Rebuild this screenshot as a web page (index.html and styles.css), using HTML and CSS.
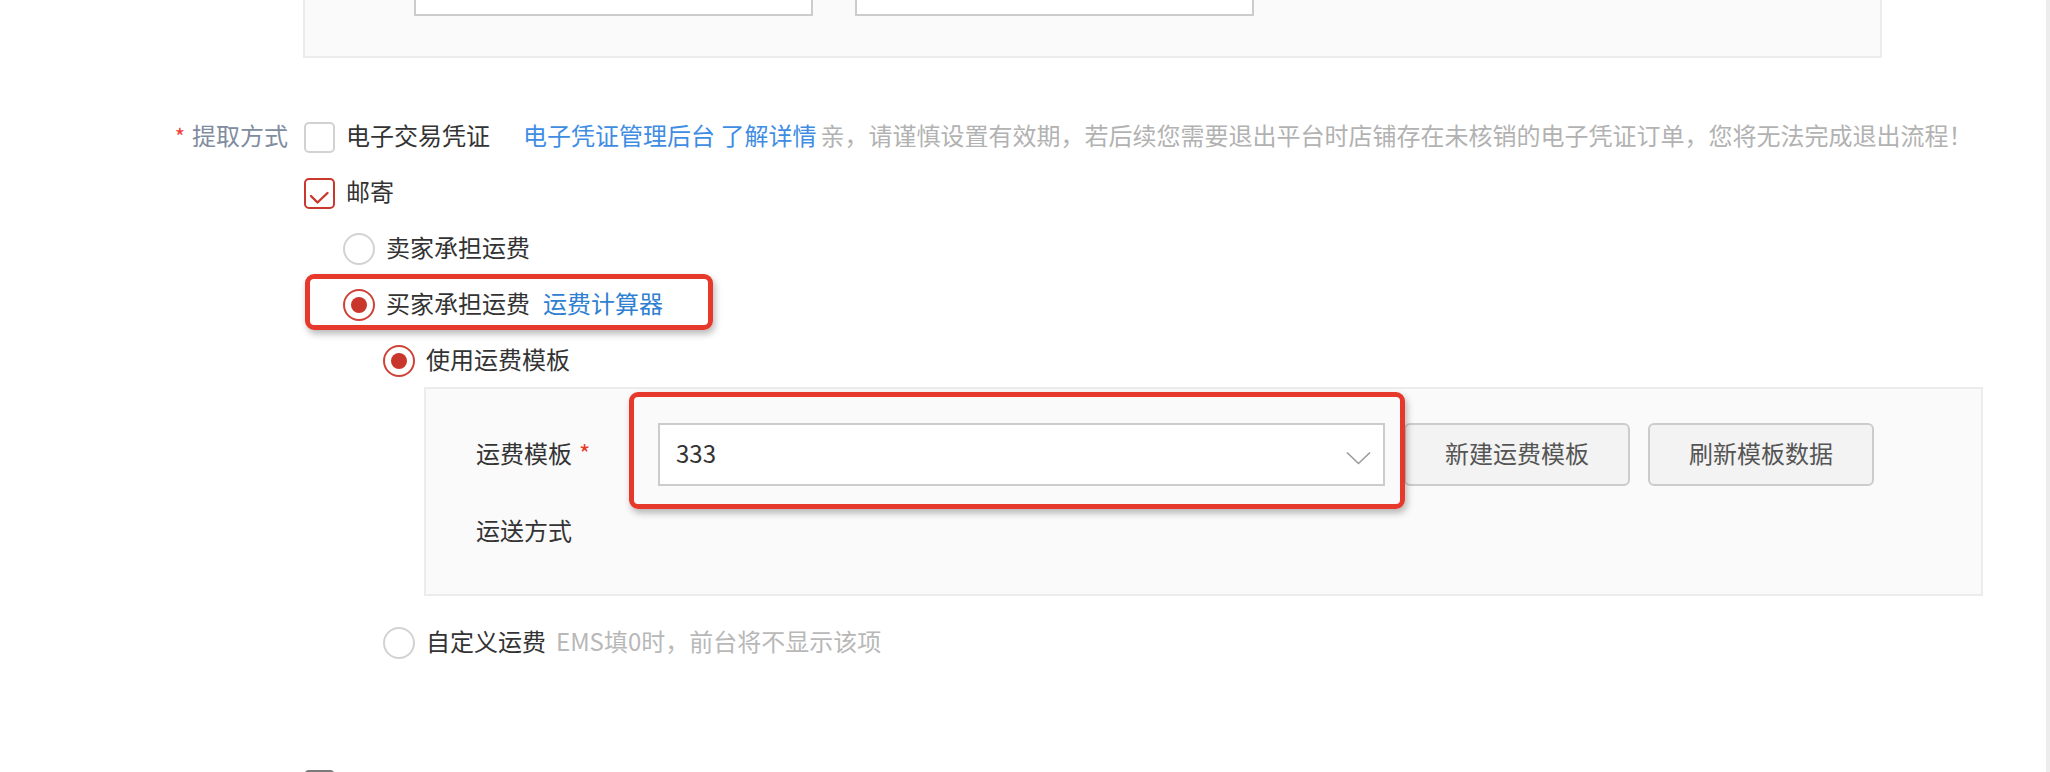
FILE: index.html
```html
<!DOCTYPE html>
<html lang="zh-CN">
<head>
<meta charset="utf-8">
<title>提取方式</title>
<link rel="stylesheet" href="styles.css">
</head>
<body>
<div class="page">
  <main class="main">
    <div class="top-box">
      <div class="top-input"></div>
      <div class="top-input"></div>
    </div>

    <div class="form-row">
      <div class="form-label"><span class="req">*</span><span class="lift">提取方式</span></div>
      <div class="form-body">
        <div class="opt">
          <span class="checkbox"></span>
          <span class="opt-text">电子交易凭证</span>
          <a class="link link-ev">电子凭证管理后台 了解详情</a>
          <span class="hint hint-ev">亲，请谨慎设置有效期，若后续您需要退出平台时店铺存在未核销的电子凭证订单，您将无法完成退出流程！</span>
        </div>
        <div class="opt">
          <span class="checkbox checked">
            <svg class="check" width="31" height="31" viewBox="0 0 31 31"><polyline points="7,18 13.5,24.5 23.5,15" fill="none" stroke="#c8382d" stroke-width="2.4" stroke-linecap="round" stroke-linejoin="round"/></svg>
          </span>
          <span class="opt-text">邮寄</span>
        </div>
        <div class="opt lvl1">
          <span class="radio"></span>
          <span class="opt-text">卖家承担运费</span>
        </div>
        <div class="opt lvl1 annotated">
          <span class="radio checked"></span>
          <span class="opt-text">买家承担运费</span>
          <a class="link link-calc">运费计算器</a>
          <span class="mark mark-1"></span>
        </div>
        <div class="opt lvl2">
          <span class="radio checked"></span>
          <span class="opt-text">使用运费模板</span>
        </div>

        <div class="tpl-box">
          <div class="tpl-row">
            <div class="tpl-label">运费模板<span class="req-after">*</span></div>
            <div class="select">
              <span class="select-value">333</span>
              <svg class="chevron" width="25" height="14" viewBox="0 0 25 14"><polyline points="1,1.5 12.5,12.5 24,1.5" fill="none" stroke="#9a9a9a" stroke-width="1.6"/></svg>
            </div>
            <button class="btn">新建运费模板</button>
            <button class="btn">刷新模板数据</button>
          </div>
          <div class="tpl-row2">
            <div class="tpl-label">运送方式</div>
          </div>
          <span class="mark mark-2"></span>
        </div>

        <div class="opt lvl2 custom">
          <span class="radio"></span>
          <span class="opt-text">自定义运费</span>
          <span class="hint hint-ems">EMS填0时，前台将不显示该项</span>
        </div>
      </div>
    </div>

    <div class="form-row next-row">
      <div class="form-label"></div>
      <div class="form-body">
        <div class="opt">
          <span class="checkbox dark"></span>
        </div>
      </div>
    </div>
  </main>
  <div class="scroll-strip"></div>
</div>
</body>
</html>
```

FILE: styles.css
```css
html, body {
  margin: 0;
  padding: 0;
  background: #ffffff;
  overflow: hidden;
}

body {
  font-family: "Noto Sans CJK SC", "Noto Sans", sans-serif;
  font-size: 24px;
  color: #333333;
}

.page {
  display: flex;
  width: 2050px;
  height: 772px;
  overflow: hidden;
}

.main {
  flex: 1;
  min-width: 0;
}

.scroll-strip {
  width: 4px;
  background: #ededed;
}

/* top box (partially scrolled out) */
.top-box {
  box-sizing: border-box;
  margin: -42px 0 0 303px;
  width: 1579px;
  height: 100px;
  border: 2px solid #ececec;
  border-top: none;
  background: #fafafa;
  padding-left: 109px;
  display: flex;
  gap: 42px;
}

.top-input {
  box-sizing: border-box;
  width: 399px;
  height: 58px;
  background: #ffffff;
  border: 2px solid #cccccc;
  border-top: none;
}

/* form rows */
.form-row {
  display: flex;
  margin-top: 51px;
}

.form-label {
  width: 288px;
  flex: none;
  height: 56px;
  display: flex;
  align-items: center;
  justify-content: flex-end;
  color: #808ca0;
}

.lift {
  padding-bottom: 5px;
}

.req {
  color: #f04134;
  margin-right: 7px;
  font-size: 22px;
  padding-bottom: 5px;
}

.form-body {
  margin-left: 16px;
  flex: 1;
}

.opt {
  position: relative;
  height: 56px;
  display: flex;
  align-items: center;
  white-space: nowrap;
}

.opt.lvl1 {
  padding-left: 39px;
}

.opt.lvl2 {
  padding-left: 79px;
}

.opt-text {
  margin-left: 11px;
  color: #333333;
  padding-bottom: 5px;
}

.checkbox {
  box-sizing: border-box;
  width: 31px;
  height: 31px;
  flex: none;
  border: 2px solid #d2d2d2;
  border-radius: 5px;
  background: #ffffff;
  position: relative;
}

.checkbox.checked {
  border-color: #c8382d;
}

.checkbox.dark {
  border-color: #7a7a7a;
}

.check {
  position: absolute;
  left: -2px;
  top: -2px;
}

.radio {
  box-sizing: border-box;
  width: 32px;
  height: 32px;
  flex: none;
  border: 2px solid #d2d2d2;
  border-radius: 50%;
  background: #ffffff;
  display: flex;
  align-items: center;
  justify-content: center;
}

.radio.checked {
  border-color: #cf4236;
}

.radio.checked::after {
  content: "";
  width: 16px;
  height: 16px;
  border-radius: 50%;
  background: #c9372c;
}

.link {
  cursor: pointer;
  padding-bottom: 5px;
}

.link-ev {
  margin-left: 33px;
  color: #3f8de3;
}

.link-calc {
  margin-left: 13px;
  color: #2f80d1;
}

.hint {
  color: #b2b2b2;
  padding-bottom: 5px;
}

.hint-ev {
  margin-left: 4px;
}

.hint-ems {
  margin-left: 10px;
  color: #b8b8b8;
}

/* annotation marks */
.mark {
  position: absolute;
  box-sizing: border-box;
  border: 5px solid #e6392c;
  border-radius: 9px;
  box-shadow: 2px 4px 7px rgba(0, 0, 0, 0.28);
  pointer-events: none;
}

.mark-1 {
  left: 1px;
  top: -3px;
  width: 408px;
  height: 56px;
}

.mark-2 {
  left: 203px;
  top: 3px;
  width: 776px;
  height: 117px;
}

/* template box */
.tpl-box {
  position: relative;
  box-sizing: border-box;
  margin: -2px 0 0 120px;
  width: 1559px;
  height: 209px;
  border: 2px solid #ececec;
  background: #fafafa;
  padding: 34px 0 0 50px;
}

.tpl-row {
  display: flex;
  align-items: center;
  height: 63px;
}

.tpl-label {
  width: 182px;
  flex: none;
  color: #333333;
  padding-bottom: 5px;
}

.req-after {
  color: #e8372b;
  margin-left: 7px;
  font-size: 24px;
}

.select {
  box-sizing: border-box;
  width: 727px;
  height: 63px;
  flex: none;
  background: #ffffff;
  border: 2px solid #cccccc;
  display: flex;
  align-items: center;
  justify-content: space-between;
  padding: 0 12px 0 16px;
}

.select-value {
  color: #333333;
  font-size: 24px;
  padding-bottom: 4px;
}

.chevron {
  margin-top: 6px;
}

.btn {
  box-sizing: border-box;
  width: 226px;
  height: 63px;
  flex: none;
  margin-left: 19px;
  background: #f3f3f3;
  border: 2px solid #cccccc;
  border-radius: 6px;
  font-family: inherit;
  font-size: 24px;
  color: #555555;
  padding: 0 0 5px;
}

.btn + .btn {
  margin-left: 18px;
}

.tpl-row2 {
  margin-top: 18px;
  height: 56px;
  display: flex;
  align-items: center;
}

.opt.custom {
  margin-top: 19px;
}

.next-row {
  margin-top: 86px;
}
```
